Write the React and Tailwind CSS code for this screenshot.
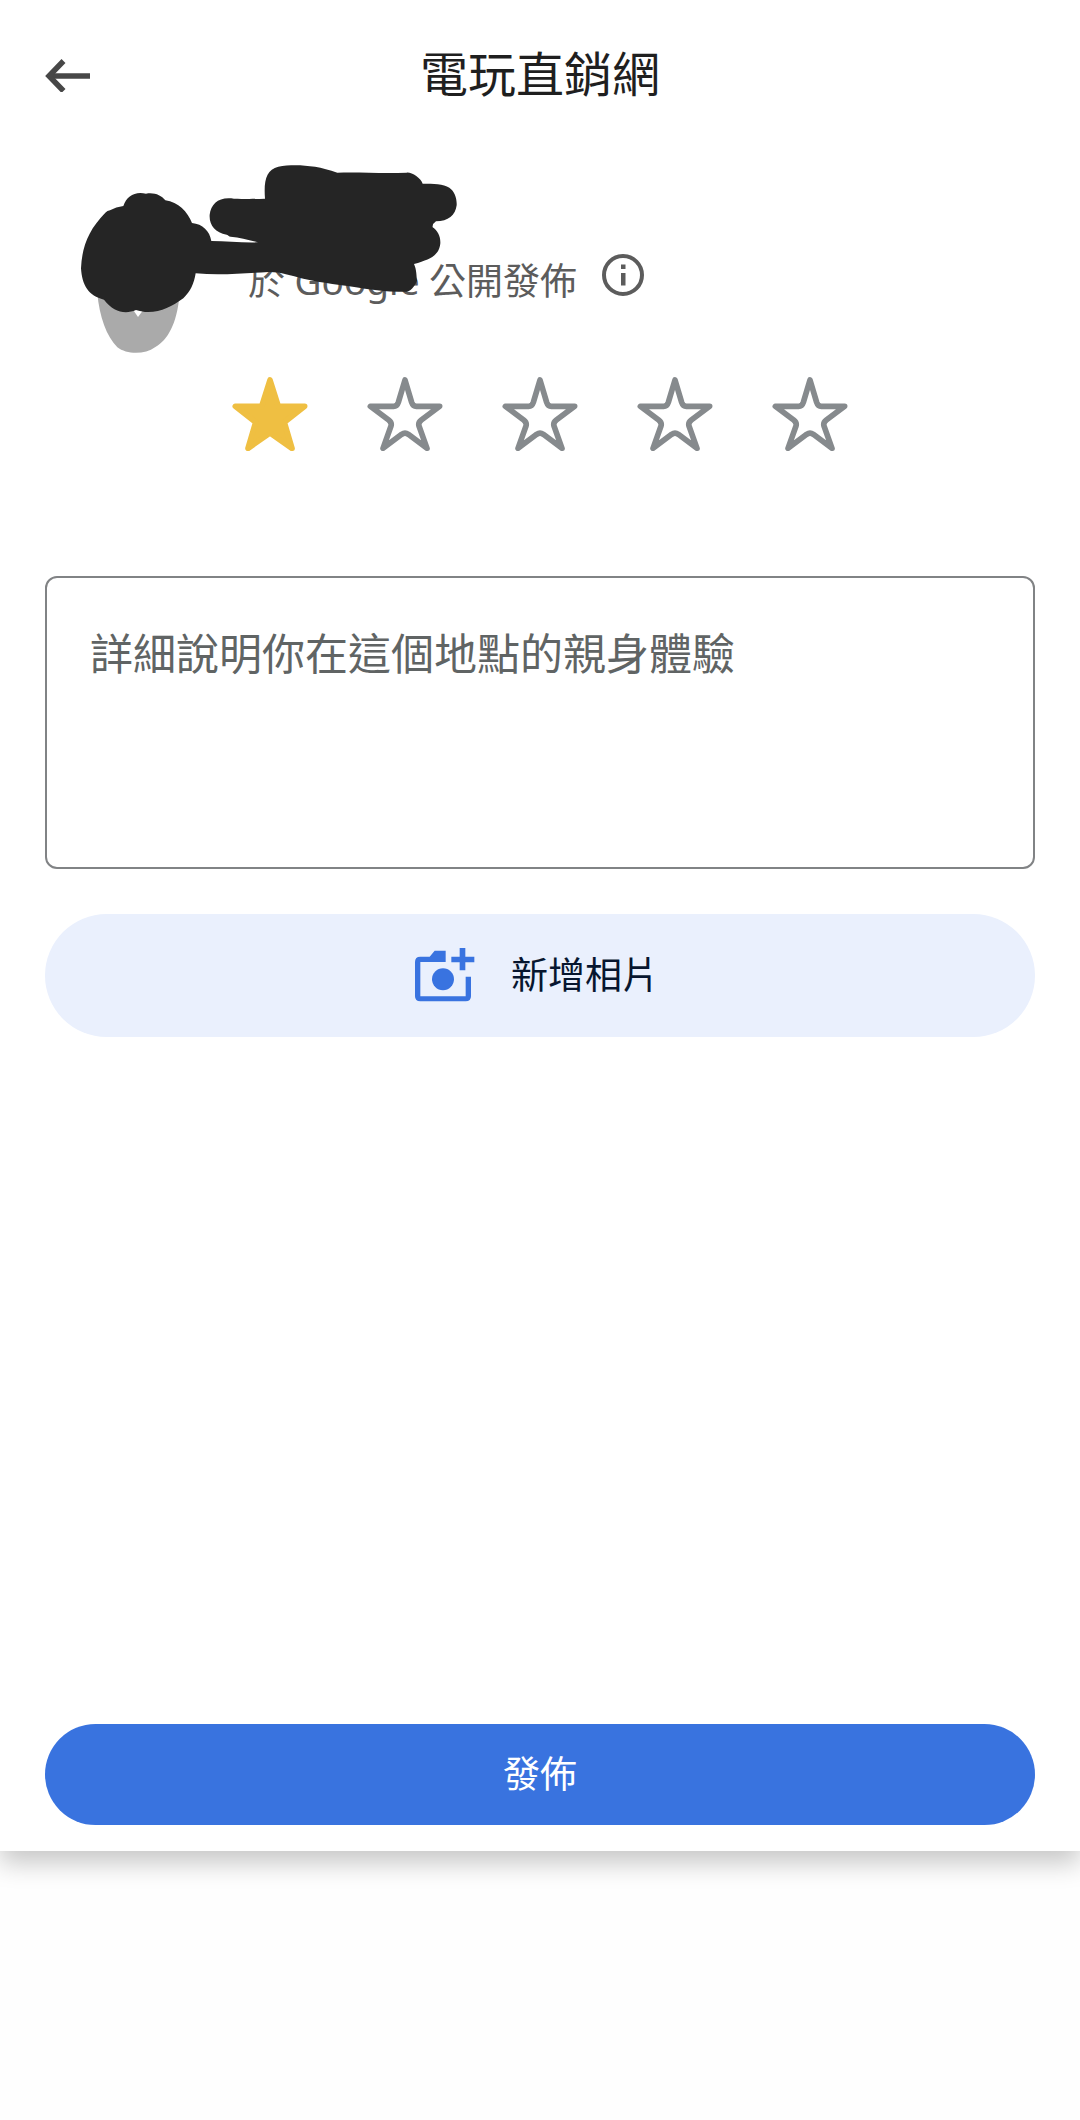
import { useState } from "react"

const STARS = [1, 2, 3, 4, 5];

const STAR_PATH =
  "M113 9 L133 76 Q137 88 147 88 L217 88 L162 129 Q152 137 155 147 L179 214 L123 172 Q113 165 103 172 L47 214 L71 147 Q74 137 64 129 L9 88 L79 88 Q89 88 93 76 Z";

const FILLED_STAR_PATH =
  "M113 9 L138 88 L217 88 L156 136 L179 214 L113 168 L47 214 L70 136 L9 88 L88 88 Z";

function BackArrow() {
  return (
    <svg className="w-[45px] h-[34px]" viewBox="0 0 90 68" fill="none" stroke="#474747" strokeWidth="11" aria-hidden="true">
      <path d="M90 36 H8" />
      <path d="M37 6 L8 36 L37 66" />
    </svg>
  );
}

function InfoIcon() {
  return (
    <svg className="w-[42px] h-[42px]" viewBox="0 0 84 84" aria-hidden="true">
      <circle cx="42" cy="42" r="38" fill="none" stroke="#5c5c5c" strokeWidth="8" />
      <rect x="38" y="21" width="9" height="9" fill="#5c5c5c" />
      <rect x="38" y="38" width="9" height="25" fill="#5c5c5c" />
    </svg>
  );
}

function Star({ filled }) {
  return (
    <svg
      className="w-[76px] h-[74px]"
      viewBox="0 0 226 222"
      fill={filled ? "#efbf42" : "none"}
      stroke={filled ? "#efbf42" : "#868a8d"}
      strokeWidth="17"
      strokeLinejoin="round"
      aria-hidden="true"
    >
      <path d={filled ? FILLED_STAR_PATH : STAR_PATH} />
    </svg>
  );
}

function AddPhotoIcon() {
  return (
    <svg className="w-[60px] h-[54px]" viewBox="0 0 180 162" fill="#3973e0" aria-hidden="true">
      <path d="M16 26 H44 L59 8 H92 V42 H16 V145 H152 V86 H168 V145 Q168 160 152 160 H16 Q0 160 0 145 V42 Q0 26 16 26 Z" />
      <circle cx="84" cy="94" r="33" />
      <path d="M134 0 H151 V26 H178 V43 H151 V67 H134 V43 H109 V26 H134 Z" />
    </svg>
  );
}

// marker strokes that hide the avatar and the user name
function Scribble() {
  return (
    <svg className="absolute left-[60px] top-0 w-[420px] h-[220px] pointer-events-none" viewBox="0 0 1260 660" aria-hidden="true">
      <path
        fill="#aaaaaa"
        d="M112 430 C118 500 140 560 172 592 C200 614 255 614 285 592 C325 568 350 520 358 440 Z"
      />
      <path fill="#ffffff" d="M218 478 L234 501 L248 482 Z" />
      <path
        fill="#252525"
        d="M190 168 C200 138 225 123 258 131 C285 127 303 136 316 151 C355 157 383 185 396 219
           C428 222 449 243 454 273 C500 273 550 279 594 277 C565 269 540 262 512 260
           C506 260 506 256 500 254 C465 247 447 225 449 194 C453 160 478 139 522 146
           C550 147 585 147 615 146 C611 92 618 60 655 50 C700 43 760 43 832 68
           C900 65 960 72 1040 68 C1055 66 1082 84 1088 101
           C1120 101 1150 101 1168 113 C1184 124 1191 145 1190 166
           C1186 196 1165 214 1128 214 Q1116 222 1118 232
           C1133 243 1142 258 1141 280 C1138 312 1118 327 1062 342
           C1070 360 1069 375 1071 392 C1063 411 1050 428 1030 425
           C990 427 950 420 915 416 C840 403 790 400 730 386 C690 376 660 365 625 366
           C550 370 480 377 407 370 C402 400 392 424 370 445
           C335 470 300 489 255 486 Q238 483 228 480 C195 494 160 486 132 449
           C85 438 66 405 63 355 C66 290 85 240 136 188 Q142 182 150 181 Q168 171 190 168 Z"
      />
    </svg>
  );
}

export default function App() {

  const [rating, setRating] = useState(1);
  const [review, setReview] = useState("");

  return (
    <div className="flex flex-col min-h-screen bg-[#fefefe] font-['Noto_Sans','Noto_Sans_CJK_TC',sans-serif]">
      <main className="flex-1 flex flex-col bg-white px-[45px] pb-[26px] shadow-[0_12px_24px_rgba(0,0,0,0.22)]">
        {/* Header */}
        <header className="grid grid-cols-[1fr_auto_1fr] items-center h-[150px]">
          <button type="button" aria-label="返回" className="justify-self-start">
            <BackArrow />
          </button>
          <h1 className="pb-[2px] text-[48px] leading-[64px] text-[#1f1f1f]">電玩直銷網</h1>
        </header>

        {/* Author */}
        <section className="relative -mx-[45px] h-[227px] pl-[248px] pt-[104px]">
          <div className="flex items-start gap-[25px]">
            <p className="text-[37px] leading-[54px] text-[#5c5c5c]">於 Google 公開發佈</p>
            <button type="button" aria-label="詳細資訊">
              <InfoIcon />
            </button>
          </div>
          <Scribble />
        </section>

        {/* Rating */}
        <div className="flex justify-center gap-[59px]">
          {STARS.map((value) => (
            <button key={value} type="button" aria-label={`${value} 顆星`} onClick={() => setRating(value)}>
              <Star filled={value <= rating} />
            </button>
          ))}
        </div>

        <textarea
          className="block w-full h-[293px] mt-[125px] px-[43px] py-[44px] resize-none rounded-xl border-2 border-[#818385] bg-white text-[43px] leading-[64px] text-[#1f1f1f] placeholder:text-[#606464] outline-none"
          aria-label="評論"
          placeholder="詳細說明你在這個地點的親身體驗"
          value={review}
          onChange={(e) => setReview(e.target.value)}
        />

        <button type="button" className="flex items-center justify-center gap-[36px] w-full h-[123px] mt-[45px] pr-[6px] pb-[2px] rounded-full bg-[#eaf0fd] text-[37px] leading-[54px] text-[#07162f]">
          <AddPhotoIcon />
          新增相片
        </button>

        <button type="button" className="w-full h-[101px] mt-auto pb-[2px] rounded-full bg-[#3973df] text-[37px] leading-[54px] text-white">
          發佈
        </button>
      </main>
      <div className="h-[269px]" />
    </div>
  );
}
